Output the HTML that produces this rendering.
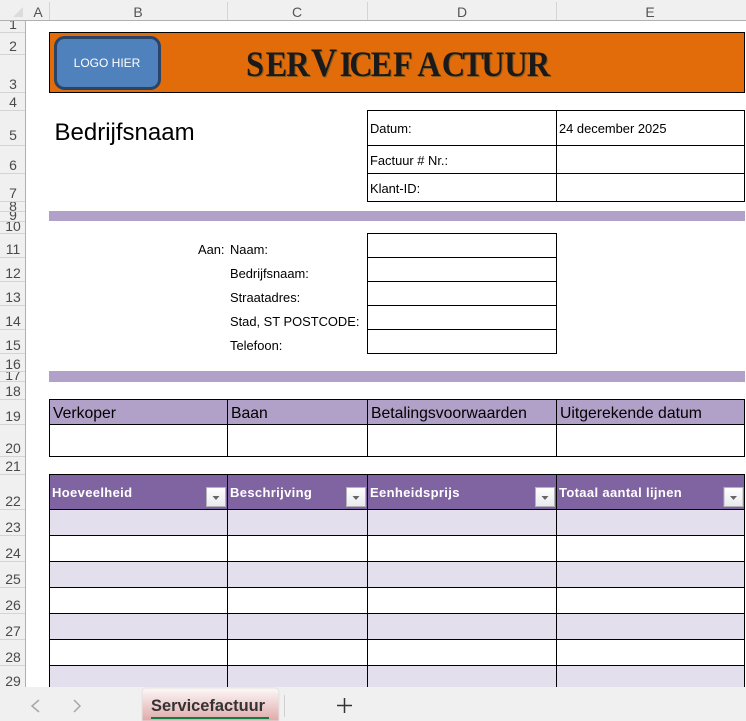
<!DOCTYPE html>
<html><head><meta charset="utf-8"><style>
html,body{margin:0;padding:0;background:#fff}
svg{display:block;font-family:"Liberation Sans",sans-serif}
.l{fill:#000;font-size:12.9px}
.h{fill:#000;font-size:15.75px}
.w{fill:#fff;font-size:13px;font-weight:bold;letter-spacing:.35px}
.r{fill:#4a4a4a;font-size:14px;text-anchor:middle}
.c{fill:#555;font-size:14px;text-anchor:middle}
.t{font-family:"Liberation Serif",serif;font-weight:bold;font-size:36px}
</style></head><body>
<svg width="746" height="721" viewBox="0 0 746 721" xmlns="http://www.w3.org/2000/svg">
<defs>
<linearGradient id="tab" x1="0" y1="0" x2="0" y2="1"><stop offset="0" stop-color="#fdf8f8"/><stop offset="1" stop-color="#dfa9a9"/></linearGradient>
<linearGradient id="btn" x1="0" y1="0" x2="0" y2="1"><stop offset="0" stop-color="#fff"/><stop offset="1" stop-color="#e8eaee"/></linearGradient>
<g id="fb"><rect x=".5" y=".5" width="19" height="19" fill="url(#btn)" stroke="#b4b4b8"/><path d="M6.5 9h7l-3.5 4z" fill="#666"/></g>
</defs>
<rect width="746" height="721" fill="#fff"/>
<!-- headers -->
<rect width="746" height="20" fill="#f0f0f0"/>
<rect y="0" width="25" height="687" fill="#f0f0f0"/>
<path d="M23 7v10H13z" fill="#dcdcdc"/>
<g shape-rendering="crispEdges">
<rect y="20" width="746" height="1" fill="#b0b0b0"/>
<rect x="25" y="20" width="1" height="667" fill="#b0b0b0"/>
<path d="M49.5 2v18M227.5 2v18M367.5 2v18M556.5 2v18" stroke="#d4d4d4"/>
<path d="M0 32.5h25M0 54.5h25M0 92.5h25M0 110.5h25M0 145.5h25M0 173.5h25M0 201.5h25M0 211.5h25M0 221.5h25M0 233.5h25M0 257.5h25M0 281.5h25M0 305.5h25M0 329.5h25M0 353.5h25M0 371.5h25M0 381.5h25M0 399.5h25M0 424.5h25M0 456.5h25M0 474.5h25M0 509.5h25M0 535.5h25M0 561.5h25M0 587.5h25M0 613.5h25M0 639.5h25M0 665.5h25" stroke="#d4d4d4"/>
</g>
<text class="c" x="38" y="17">A</text><text class="c" x="138" y="17">B</text><text class="c" x="297" y="17">C</text><text class="c" x="462" y="17">D</text><text class="c" x="650" y="17">E</text>
<svg x="0" y="21" width="25" height="11"><text class="r" x="13" y="8">1</text></svg>
<text class="r" x="13" y="51">2</text><text class="r" x="13" y="89">3</text><text class="r" x="13" y="107">4</text><text class="r" x="13" y="140">5</text><text class="r" x="13" y="170">6</text><text class="r" x="13" y="198">7</text>
<svg x="0" y="202" width="25" height="9"><text class="r" x="13" y="9">8</text></svg>
<svg x="0" y="212" width="25" height="9"><text class="r" x="13" y="8">9</text></svg>
<svg x="0" y="222" width="25" height="11"><text class="r" x="13" y="9">10</text></svg>
<text class="r" x="13" y="254">11</text><text class="r" x="13" y="278">12</text><text class="r" x="13" y="302">13</text><text class="r" x="13" y="326">14</text><text class="r" x="13" y="350">15</text>
<svg x="0" y="354" width="25" height="17"><text class="r" x="13" y="15">16</text></svg>
<svg x="0" y="372" width="25" height="9"><text class="r" x="13" y="8">17</text></svg>
<text class="r" x="13" y="396">18</text><text class="r" x="13" y="421">19</text><text class="r" x="13" y="453">20</text><text class="r" x="13" y="471">21</text><text class="r" x="13" y="506">22</text><text class="r" x="13" y="532">23</text><text class="r" x="13" y="558">24</text><text class="r" x="13" y="584">25</text><text class="r" x="13" y="610">26</text><text class="r" x="13" y="636">27</text><text class="r" x="13" y="662">28</text><text class="r" x="13" y="686">29</text>

<g shape-rendering="crispEdges">
<!-- banner -->
<rect x="49.5" y="32.5" width="695" height="60" fill="#e36c0a" stroke="#000"/>
<!-- bars -->
<rect x="49" y="211" width="696" height="10" fill="#b1a0c7"/>
<rect x="49" y="371" width="696" height="11" fill="#b1a0c7"/>
<!-- filled rows -->
<rect x="49" y="399" width="696" height="25" fill="#b1a0c7"/>
<rect x="49" y="474" width="696" height="35" fill="#8064a2"/>
<rect x="49" y="509" width="696" height="26" fill="#e4dfec"/>
<rect x="49" y="561" width="696" height="26" fill="#e4dfec"/>
<rect x="49" y="613" width="696" height="26" fill="#e4dfec"/>
<rect x="49" y="665" width="696" height="22" fill="#e4dfec"/>
<!-- lines -->
<path d="M367.5 110v92M556.5 110v92M744.5 110v92M367 110.5h378M367 145.5h378M367 173.5h378M367 201.5h378" stroke="#000" fill="none"/>
<path d="M367.5 233v121M556.5 233v121M367 233.5h190M367 257.5h190M367 281.5h190M367 305.5h190M367 329.5h190M367 353.5h190" stroke="#000" fill="none"/>
<path d="M49.5 399v58M227.5 399v58M367.5 399v58M556.5 399v58M744.5 399v58M49 399.5h696M49 424.5h696M49 456.5h696" stroke="#000" fill="none"/>
<path d="M49.5 474v213M227.5 474v213M367.5 474v213M556.5 474v213M744.5 474v213M49 474.5h696M49 509.5h696M49 535.5h696M49 561.5h696M49 587.5h696M49 613.5h696M49 639.5h696M49 665.5h696" stroke="#000" fill="none"/>
</g>
<!-- logo -->
<rect x="55.5" y="37.5" width="104" height="51" rx="9" fill="#4f81bd" stroke="#2a4468" stroke-width="3"/>
<text x="107" y="67" text-anchor="middle" fill="#fff" font-size="12">LOGO HIER</text>
<!-- title -->
<g transform="translate(1,1) scale(.9,1)"><text class="t" fill="#8a5a1a" y="76" x="273.3 295.2 318.1 345.600 377.4 388.1 411.9 436.7 463.7 490.9 513.6 534.8 560.3 585.3">SER<tspan font-size="40">V</tspan>ICEFACTUUR</text></g>
<g transform="scale(.9,1)"><text class="t" fill="#1a1a1a" y="76" x="273.3 295.2 318.1 345.600 377.4 388.1 411.9 436.7 463.7 490.9 513.6 534.8 560.3 585.3">SER<tspan font-size="40">V</tspan>ICEFACTUUR</text></g>
<!-- text -->
<text x="54.500" y="140" font-size="24" fill="#000">Bedrijfsnaam</text>
<text class="l" x="370" y="133">Datum:</text><text class="l" x="559" y="133">24 december 2025</text>
<text class="l" x="370" y="165">Factuur # Nr.:</text><text class="l" x="370" y="193">Klant-ID:</text>
<text class="l" x="198" y="254">Aan:</text><text class="l" x="230" y="254">Naam:</text><text class="l" x="230" y="278">Bedrijfsnaam:</text><text class="l" x="230" y="302">Straatadres:</text><text class="l" x="230" y="326">Stad, ST POSTCODE:</text><text class="l" x="230" y="350">Telefoon:</text>
<text class="h" x="53" y="418">Verkoper</text><text class="h" x="231" y="418">Baan</text><text class="h" x="371" y="418">Betalingsvoorwaarden</text><text class="h" x="560" y="418">Uitgerekende datum</text>
<text class="w" x="52" y="497">Hoeveelheid</text><text class="w" x="230" y="497">Beschrijving</text><text class="w" x="370" y="497">Eenheidsprijs</text><text class="w" x="559" y="497">Totaal aantal lijnen</text>
<use href="#fb" x="206" y="487"/><use href="#fb" x="346" y="487"/><use href="#fb" x="535" y="487"/><use href="#fb" x="723.5" y="487"/>
<!-- bottom bar -->
<rect y="687" width="746" height="34" fill="#f0f0f0"/>
<path d="M39 700l-7 6 7 6M74 700l6 6-6 6" fill="none" stroke="#a8a8a8" stroke-width="1.500"/>
<path d="M142 721v-29q0-4 4-4h129q4 0 4 4v29z" fill="url(#tab)" stroke="#e2e2e2"/>
<text x="151" y="711" font-size="16.500" font-weight="bold" fill="#333" textLength="114" lengthAdjust="spacingAndGlyphs">Servicefactuur</text>
<rect x="151" y="717" width="118" height="2" fill="#107c41"/>
<rect x="284" y="695" width="1" height="22" fill="#cfcfcf"/>
<path d="M337 705.500h15M344.500 698v15" stroke="#333" stroke-width="1.500"/>
</svg>
</body></html>
